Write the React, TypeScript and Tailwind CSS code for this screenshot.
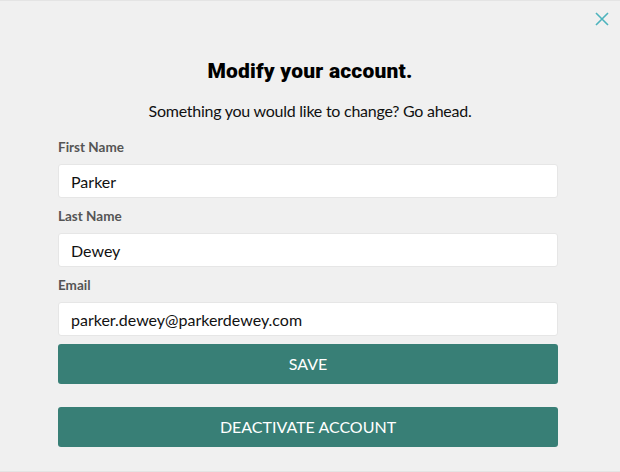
import { useState } from 'react';

function Field({
  label,
  value,
  onChange,
}: {
  label: string;
  value: string;
  onChange: (v: string) => void;
}) {
  return (
    <div className="flex flex-col">
      <label className="h-[20px] mb-[7px] text-[13.5px] leading-[20px] font-bold text-[#555555]">
        {label}
      </label>
      <input
        className="h-[34px] w-full rounded-[3px] border border-[#e6e6e6] bg-white px-[12px] text-[16px] text-[#111111] outline-none"
        value={value}
        onChange={(e) => onChange(e.target.value)}
      />
    </div>
  );
}

function App() {
  const [firstName, setFirstName] = useState('Parker');
  const [lastName, setLastName] = useState('Dewey');
  const [email, setEmail] = useState('parker.dewey@parkerdewey.com');

  return (
    <div
      className="relative h-[472px] w-[620px] border-t border-b border-[#e4e4e4] bg-[#f0f0f0]"
      style={{ fontFamily: 'Lato, "Noto Sans", sans-serif' }}
    >
      <button className="absolute right-[11px] top-[11px] text-[#4db3bd]">
        <svg width="14" height="14" viewBox="0 0 14 14" fill="none">
          <path d="M1 1L13 13M13 1L1 13" stroke="currentColor" strokeWidth="1.6" />
        </svg>
      </button>

      <div className="px-[58px] pt-[56px] text-center">
        <h1
          className="text-[21px] leading-[28px] font-black tracking-[0.2px] text-black"
          style={{ fontFamily: 'Roboto, "Liberation Sans", sans-serif' }}
        >
          Modify your account.
        </h1>
        <p className="mt-[14px] text-[16px] leading-[24px] tracking-[-0.25px] text-[#111111]">
          Something you would like to change? Go ahead.
        </p>
      </div>

      <form className="mt-[14px] flex flex-col gap-[8px] px-[58px] pr-[62px]">
        <Field label="First Name" value={firstName} onChange={setFirstName} />
        <Field label="Last Name" value={lastName} onChange={setLastName} />
        <Field label="Email" value={email} onChange={setEmail} />
      </form>

      <div className="mt-[8px] flex flex-col gap-[23px] pl-[58px] pr-[62px]">
        <button className="h-[40px] w-full rounded-[3px] bg-[#387f76] text-[16px] uppercase text-white">
          Save
        </button>
        <button className="h-[40px] w-full rounded-[3px] bg-[#387f76] text-[16px] uppercase text-white">
          Deactivate Account
        </button>
      </div>
    </div>
  );
}

export default App;
